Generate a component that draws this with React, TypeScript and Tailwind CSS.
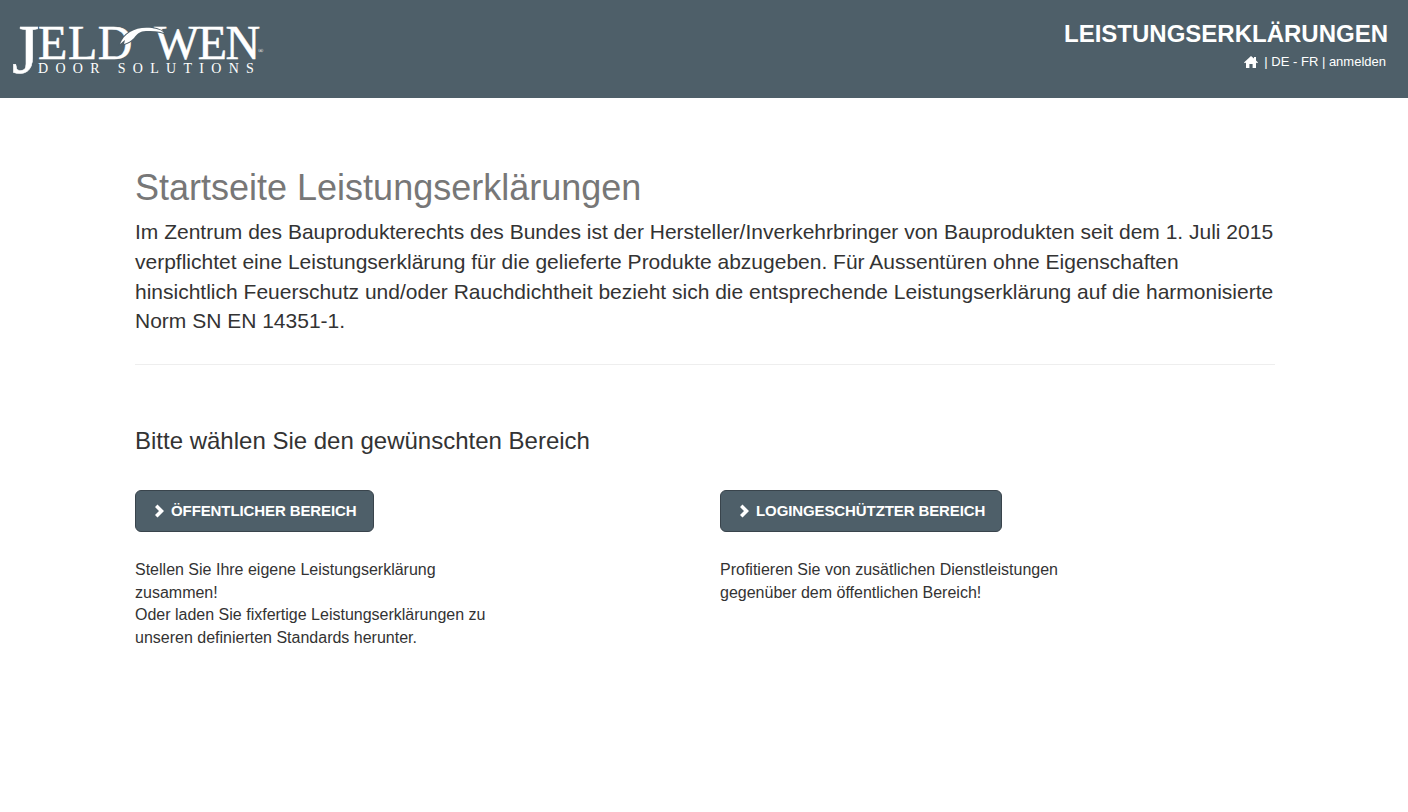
import React from "react";

const sans = "font-['Liberation_Sans',Arial,sans-serif]";

const Chevron = () => (
  <svg width="11" height="14" viewBox="0 0 11 14" className="mr-[6px] shrink-0">
    <path d="M3.5 0.5 L1 3 L5 7 L1 11 L3.5 13.5 L10 7 Z" fill="#fff" />
  </svg>
);

const HomeIcon = () => (
  <svg width="14" height="12" viewBox="0 0 14 12">
    <path d="M7 0 L10 2.6 V1 H12 V4.4 L14 6.4 L13 7.2 L12 6.4 V12 H8.6 V8 H5.4 V12 H2 V6.4 L1 7.2 L0 6.4 Z" fill="#fff" />
  </svg>
);

const Logo = () => (
  <div className="relative h-[64px] w-[256px] text-white select-none font-['Liberation_Serif',serif] [-webkit-text-stroke:0.5px_white]">
    <span className="absolute left-[0px] top-[-8px] text-[70px] leading-[70px]">J</span>
    <span className="absolute left-[26px] top-[3px] text-[48px] leading-[34px] tracking-[0.6px]">ELD</span>
    <span className="absolute left-[142px] top-[3px] text-[48px] leading-[34px] tracking-[-1.6px]">WEN</span>
    <svg width="60" height="30" viewBox="0 0 60 30" className="absolute left-[98px] top-[-2px]">
      <path
        d="M10 23 C12 18 15 14 20 11 C26 7 34 6 42 7 C47 8 52 9 54 12 C48 10 42 10 36 10 C30 10 27 13 24 17 C21 20 18 22 14 23 L15 19 C13 20 12 22 10 23 Z"
        fill="#fff"
        stroke="#4e5f69"
        strokeWidth="2"
        paintOrder="stroke"
      />
    </svg>
    <div className="absolute left-[26px] top-[40px] text-[14px] leading-[12px] tracking-[7.3px] whitespace-nowrap [-webkit-text-stroke:0px]">
      DOOR SOLUTIONS
    </div>
    <span className="absolute left-[246px] top-[24px] text-[7px] leading-[8px] [-webkit-text-stroke:0px]">®</span>
  </div>
);

const AreaButton = ({ label }: { label: string }) => (
  <button className="flex h-[42px] items-center rounded-[6px] border border-[#39444c] bg-[#4e5f69] pl-[18px] pr-[16px] text-[15px] font-bold tracking-[-0.1px] text-white">
    <Chevron />
    {label}
  </button>
);

export default function App() {
  return (
    <div className={`${sans} min-h-[812px] bg-white text-[#333]`}>
      <header className="flex h-[98px] items-start justify-between bg-[#4e5f69] pl-[12px] pr-[20px] text-white">
        <div className="pt-[23px]">
          <Logo />
        </div>
        <div className="flex flex-col items-end pt-[19px]">
          <div className="text-[24px] font-bold leading-[30px]">LEISTUNGSERKLÄRUNGEN</div>
          <div className="mt-[4px] mr-[2px] flex items-center text-[13px] leading-[17px]">
            <HomeIcon />
            <span className="ml-[6px]">| DE - FR | anmelden</span>
          </div>
        </div>
      </header>

      <main className="mx-auto w-[1170px] pl-[16px] pr-[14px]">
        <h1 className="mt-[68px] text-[36px] font-normal leading-[44px] text-[#777]">
          Startseite Leistungserklärungen
        </h1>
        <p className="mt-[7px] text-[21px] leading-[29.8px]">
          Im Zentrum des Bauprodukterechts des Bundes ist der Hersteller/Inverkehrbringer von Bauprodukten seit dem 1. Juli 2015 verpflichtet eine Leistungserklärung für die gelieferte Produkte abzugeben. Für Aussentüren ohne Eigenschaften hinsichtlich Feuerschutz und/oder Rauchdichtheit bezieht sich die entsprechende Leistungserklärung auf die harmonisierte Norm SN EN 14351-1.
        </p>
        <hr className="mt-[28px] border-t border-[#eee]" />
        <h2 className="mt-[61px] text-[24px] font-normal leading-[30px]">
          Bitte wählen Sie den gewünschten Bereich
        </h2>
        <div className="mt-[34px] grid grid-cols-2 gap-x-[30px]">
          <div>
            <AreaButton label="ÖFFENTLICHER BEREICH" />
            <p className="mt-[27px] w-[365px] text-[16px] leading-[22.6px]">
              Stellen Sie Ihre eigene Leistungserklärung zusammen!
              <br />
              Oder laden Sie fixfertige Leistungserklärungen zu unseren definierten Standards herunter.
            </p>
          </div>
          <div>
            <AreaButton label="LOGINGESCHÜTZTER BEREICH" />
            <p className="mt-[27px] w-[365px] text-[16px] leading-[22.6px]">
              Profitieren Sie von zusätlichen Dienstleistungen gegenüber dem öffentlichen Bereich!
            </p>
          </div>
        </div>
      </main>
    </div>
  );
}
